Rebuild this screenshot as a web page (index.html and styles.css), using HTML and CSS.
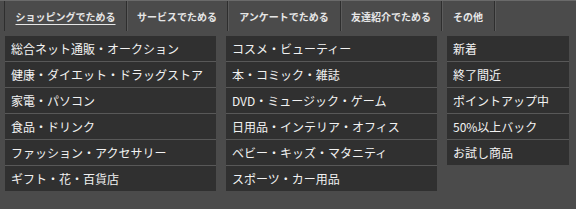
FILE: index.html
```html
<!DOCTYPE html>
<html lang="ja">
<head>
<meta charset="utf-8">
<link rel="stylesheet" href="styles.css">
</head>
<body>
<div class="page">
  <nav class="tabs">
    <a class="tab active t1">ショッピングでためる</a>
    <a class="tab t2">サービスでためる</a>
    <a class="tab t3">アンケートでためる</a>
    <a class="tab t4">友達紹介でためる</a>
    <a class="tab t5">その他</a>
  </nav>
  <div class="cols">
    <ul class="col wide">
      <li>総合ネット通販・オークション</li>
      <li>健康・ダイエット・ドラッグストア</li>
      <li>家電・パソコン</li>
      <li>食品・ドリンク</li>
      <li>ファッション・アクセサリー</li>
      <li>ギフト・花・百貨店</li>
    </ul>
    <ul class="col wide">
      <li>コスメ・ビューティー</li>
      <li>本・コミック・雑誌</li>
      <li>DVD・ミュージック・ゲーム</li>
      <li>日用品・インテリア・オフィス</li>
      <li>ベビー・キッズ・マタニティ</li>
      <li>スポーツ・カー用品</li>
    </ul>
    <ul class="col narrow">
      <li>新着</li>
      <li>終了間近</li>
      <li>ポイントアップ中</li>
      <li>50%以上バック</li>
      <li>お試し商品</li>
    </ul>
  </div>
</div>
</body>
</html>
```

FILE: styles.css
```css
html, body {
  margin: 0;
  padding: 0;
  background: #4b4b4b;
}
body {
  font-family: "Noto Sans CJK JP", "Noto Sans", sans-serif;
  width: 576px;
  height: 209px;
  overflow: hidden;
}
.page {
  border-top: 1px solid #6a6a6a;
}
.tabs {
  display: flex;
  height: 30px;
  padding-left: 4px;
}
.tab {
  box-sizing: border-box;
  display: flex;
  align-items: center;
  justify-content: center;
  font-size: 10px;
  font-weight: bold;
  color: #e6e6e6;
  border-right: 1px solid #2e2e2e;
  box-shadow: 1px 0 0 #5c5c5c;
  white-space: nowrap;
}
.t1 { width: 123px; }
.t2 { width: 101px; }
.t3 { width: 113px; }
.t4 { width: 101px; }
.t5 { width: 53px; }
.tab.active {
  border-left: 1px solid #2e2e2e;
  text-decoration: underline;
  text-underline-offset: 3px;
}
.cols {
  display: flex;
  gap: 10px;
  margin-top: 5px;
  padding-left: 5px;
  align-items: flex-start;
}
.col {
  list-style: none;
  margin: 0;
  padding: 0;
}
.col.wide { width: 211px; }
.col.narrow { width: 122px; }
.col li {
  height: 25px;
  line-height: 25px;
  padding-left: 6px;
  background: #303030;
  color: #f2f2f2;
  font-size: 12px;
  border-bottom: 1px solid #585858;
  white-space: nowrap;
  overflow: hidden;
}
.col li:last-child {
  border-bottom: none;
}
```
